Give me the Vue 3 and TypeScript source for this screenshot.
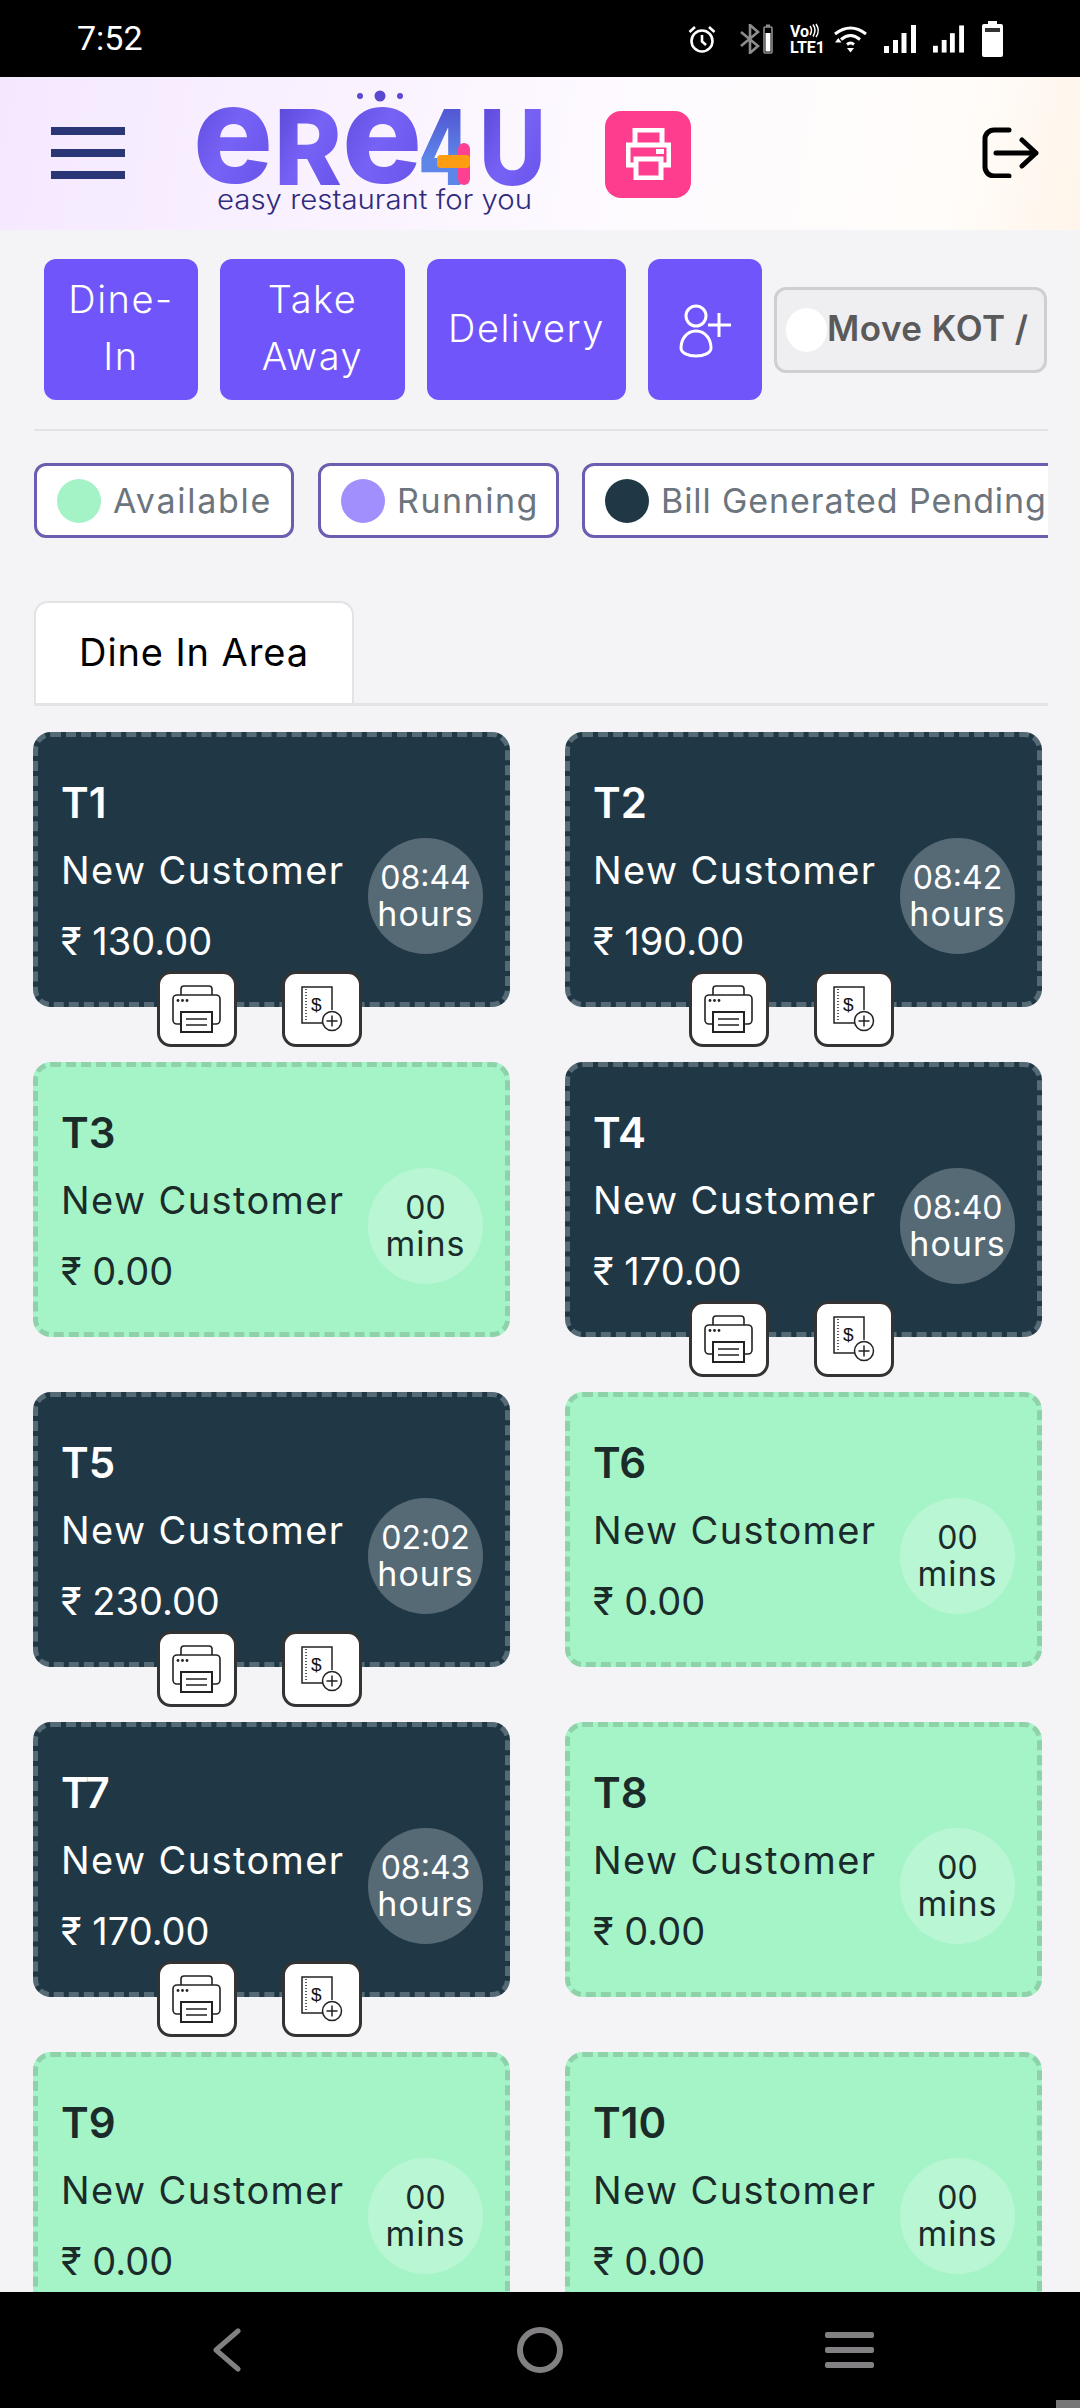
<script setup lang="ts">
interface Table {
  name: string
  running: boolean
  amount: string
  time: string
  unit: string
}

const tables: Table[] = [
  { name: 'T1', running: true, amount: '130.00', time: '08:44', unit: 'hours' },
  { name: 'T2', running: true, amount: '190.00', time: '08:42', unit: 'hours' },
  { name: 'T3', running: false, amount: '0.00', time: '00', unit: 'mins' },
  { name: 'T4', running: true, amount: '170.00', time: '08:40', unit: 'hours' },
  { name: 'T5', running: true, amount: '230.00', time: '02:02', unit: 'hours' },
  { name: 'T6', running: false, amount: '0.00', time: '00', unit: 'mins' },
  { name: 'T7', running: true, amount: '170.00', time: '08:43', unit: 'hours' },
  { name: 'T8', running: false, amount: '0.00', time: '00', unit: 'mins' },
  { name: 'T9', running: false, amount: '0.00', time: '00', unit: 'mins' },
  { name: 'T10', running: false, amount: '0.00', time: '00', unit: 'mins' }
]

const legend = [
  { label: 'Available', color: 'mint' },
  { label: 'Running', color: 'violet' },
  { label: 'Bill Generated Pending', color: 'navy' }
]
</script>

<template>
  <div class="phone">
    <div class="status">
      <span class="clock">7:52</span>
      <div class="status-icons">
        <svg class="s-alarm" width="28" height="28" viewBox="0 0 28 28" fill="none" stroke="#fff" stroke-width="2.6">
          <circle cx="14" cy="16" r="10.5" />
          <path d="M14 10v6.5l4 3.5M1.5 7 7 2M26.5 7 21 2" />
        </svg>
        <svg class="s-bt" width="20" height="30" viewBox="0 0 20 30" fill="none" stroke="#8d8d8d" stroke-width="2.6">
          <path d="M1 8l17 14-8 7V1l8 7L1 22" />
        </svg>
        <svg class="s-minibat" width="10" height="30" viewBox="0 0 10 30">
          <rect x="1" y="3" width="8" height="26" rx="1" fill="none" stroke="#8d8d8d" stroke-width="1.6" />
          <rect x="3" y="0.5" width="4" height="2.5" fill="#8d8d8d" />
          <rect x="2.5" y="9" width="5" height="18.500" fill="#fff" />
        </svg>
        <svg class="s-volte" width="36" height="30" viewBox="0 0 36 30">
          <text x="0" y="13" class="volte-text">Vo</text>
          <path d="M20 2q3 4 0 9M23 0.500q4 5.500 0 12M26 0q4.500 6.500 0 13" fill="none" stroke="#fff" stroke-width="1.5" />
          <text x="0" y="29" class="volte-text" textLength="35" lengthAdjust="spacingAndGlyphs">LTE1</text>
        </svg>
        <svg class="s-wifi" width="33" height="28" viewBox="0 0 33 28" fill="none" stroke="#fff" stroke-width="3">
          <path d="M1 9q15.500-12 31 0M7 14.500q9.500-8 19 0M13 19.500q3.500-3 7 0" />
          <path d="M13 23h7l-3.500 4.500z" fill="#fff" stroke="none" />
          <path d="M1 16.500h6.500l-3.200-4.500z" fill="#fff" stroke="none" transform="translate(0 1)" />
        </svg>
        <svg class="s-signal" width="32" height="28" viewBox="0 0 32 28" fill="#fff">
          <rect x="0" y="21" width="5" height="7" /><rect x="9" y="15" width="5" height="13" /><rect x="17.500" y="8" width="5" height="20" /><rect x="27" y="0" width="5" height="28" />
        </svg>
        <svg class="s-signal2" width="31" height="28" viewBox="0 0 32 28" fill="#fff">
          <rect x="0" y="21" width="5" height="7" /><rect x="9" y="15" width="5" height="13" /><rect x="17.500" y="8" width="5" height="20" /><rect x="27" y="0" width="5" height="28" />
        </svg>
        <svg class="s-bat" width="21" height="36" viewBox="0 0 21 36">
          <path d="M6 0h9v3h4a2 2 0 0 1 2 2v29a2 2 0 0 1-2 2H2a2 2 0 0 1-2-2V5a2 2 0 0 1 2-2h4z" fill="#fff" />
          <rect x="3" y="7" width="15" height="4" fill="#333" />
        </svg>
      </div>
    </div>

    <header class="topbar">
      <div class="burger"><i></i><i></i><i></i></div>
      <svg class="logo" width="346" height="123" viewBox="0 0 346 123">
        <defs>
          <linearGradient id="lg" x1="0" y1="0" x2="1" y2="1">
            <stop offset="0" stop-color="#5443d0" />
            <stop offset="0.5" stop-color="#7762f6" />
            <stop offset="1" stop-color="#6450e6" />
          </linearGradient>
          <linearGradient id="four" x1="0" y1="0" x2="0" y2="1">
            <stop offset="0" stop-color="#4c3fc8" />
            <stop offset="0.6" stop-color="#5d86e8" />
            <stop offset="1" stop-color="#5d86e8" />
          </linearGradient>
        </defs>
        <circle cx="164" cy="4" r="3" fill="#5b4ad0" />
        <circle cx="184" cy="4" r="5.500" fill="#5b4ad0" />
        <circle cx="204" cy="4" r="3" fill="#5b4ad0" />
        <text x="-3" y="91" class="logo-e" fill="url(#lg)" textLength="80" lengthAdjust="spacingAndGlyphs">e</text>
        <text x="78" y="93" class="logo-cap" fill="url(#lg)" textLength="68" lengthAdjust="spacingAndGlyphs">R</text>
        <text x="146" y="91" class="logo-e" fill="url(#lg)" textLength="80" lengthAdjust="spacingAndGlyphs">e</text>
        <text x="222" y="93" class="logo-cap" fill="url(#four)" textLength="52" lengthAdjust="spacingAndGlyphs">4</text>
        <rect x="262" y="51" width="12" height="42" rx="6" fill="#ff4090" />
        <rect x="241" y="63" width="33" height="13" rx="4" fill="#ff9d12" />
        <text x="283" y="93" class="logo-cap" fill="url(#lg)" textLength="67" lengthAdjust="spacingAndGlyphs">U</text>
        <text x="21" y="117" class="logo-tag" textLength="315" lengthAdjust="spacingAndGlyphs">easy restaurant for you</text>
      </svg>
      <button class="print-btn" type="button">
        <svg width="45" height="52" viewBox="0 0 45 52" fill="none" stroke="#fff" stroke-width="5">
          <path d="M9 17V2h27v15" />
          <path d="M9 37H2V17h41v20h-7" />
          <rect x="10" y="31" width="25" height="19" />
          <rect x="30" y="21" width="8" height="5" fill="#fff" stroke="none" />
        </svg>
      </button>
      <svg class="logout" width="57" height="51" viewBox="0 0 57 51" fill="none" stroke="#000" stroke-width="5" stroke-linecap="round" stroke-linejoin="round">
        <path d="M27 3H12a9 9 0 0 0-9 9v28a9 9 0 0 0 9 9h15" />
        <path d="M14 26h40M40 13l14 13-14 13" />
      </svg>
    </header>

    <main class="content">
      <div class="modes">
        <button class="mode mode-dine" type="button"><span>Dine-<br />In</span></button>
        <button class="mode mode-take" type="button"><span>Take<br />Away</span></button>
        <button class="mode mode-delivery" type="button"><span>Delivery</span></button>
        <button class="mode mode-user" type="button">
          <svg width="54" height="56" viewBox="0 0 54 56" fill="none" stroke="#fff" stroke-width="3">
            <circle cx="18" cy="14" r="10" />
            <path d="M18 29c-10 0-15 9-15 17 0 5 7 8 15 8s15-3 15-8c0-8-5-17-15-17z" />
            <path d="M41 11v24M30 23h23" />
          </svg>
        </button>
        <div class="move-kot"><span class="knob"></span><span class="move-label">Move KOT /</span></div>
      </div>
      <div class="divider"></div>

      <div class="legend">
        <div v-for="item in legend" :key="item.label" class="chip" :class="'chip-' + item.color">
          <span class="dot" :class="item.color"></span>
          <span class="chip-label">{{ item.label }}</span>
        </div>
      </div>

      <div class="tabs">
        <div class="tab"><span>Dine In Area</span></div>
      </div>

      <div class="grid">
        <article v-for="t in tables" :key="t.name" class="card" :class="t.running ? 'dark' : 'green'">
          <div class="card-body">
            <div class="info">
              <div class="t-name">{{ t.name }}</div>
              <div class="t-customer">New Customer</div>
              <div class="t-amount">₹ {{ t.amount }}</div>
            </div>
            <div class="timer">
              <span class="t-time">{{ t.time }}</span>
              <span class="t-unit">{{ t.unit }}</span>
            </div>
          </div>
          <div v-if="t.running" class="actions">
            <button class="act" type="button">
              <svg width="50" height="48" viewBox="0 0 50 48" fill="none" stroke="#222" stroke-width="1.600">
                <path d="M9 10V4a3 3 0 0 1 3-3h25a3 3 0 0 1 3 3v6" />
                <path d="M9 39H5a4 4 0 0 1-4-4V14a4 4 0 0 1 4-4h39a4 4 0 0 1 4 4v21a4 4 0 0 1-4 4h-4" />
                <rect x="9" y="27" width="31" height="20" stroke-width="2" />
                <path d="M14 34h21M14 40h21" />
                <circle cx="6" cy="15.500" r="1.400" fill="#222" stroke="none" />
                <circle cx="10.500" cy="15.500" r="1.400" fill="#222" stroke="none" />
                <circle cx="15" cy="15.500" r="1.400" fill="#222" stroke="none" />
              </svg>
            </button>
            <button class="act" type="button">
              <svg width="42" height="46" viewBox="0 0 42 46" fill="none" stroke="#222" stroke-width="1.500">
                <path d="M22 37H1V1h30v23" />
                <path d="M5 3v32" stroke-dasharray="1 2" />
                <text x="10" y="25" class="dollar">$</text>
                <circle cx="31" cy="35" r="9.500" />
                <path d="M31 29.500v11M25.500 35h11" />
              </svg>
            </button>
          </div>
        </article>
      </div>
    </main>

    <nav class="softkeys">
      <svg width="30" height="44" viewBox="0 0 30 44" fill="none" stroke="#828082" stroke-width="5" stroke-linecap="round" stroke-linejoin="round">
        <path d="M26 3 4 22l22 19" />
      </svg>
      <svg width="48" height="48" viewBox="0 0 48 48" fill="none" stroke="#828082" stroke-width="6">
        <circle cx="24" cy="24" r="20" />
      </svg>
      <div class="menu-key"><i></i><i></i><i></i></div>
    </nav>
    <div class="corner"></div>
  </div>
</template>

<style>
html,
body {
  margin: 0;
  background: #f4f4f7;
}
</style>

<style scoped>
.phone {
  position: relative;
  width: 1080px;
  height: 2408px;
  overflow: hidden;
  background: #f4f4f7;
  font-family: Inter, "Noto Sans", sans-serif;
}
.status {
  height: 77px;
  background: #000;
  display: flex;
  align-items: center;
  justify-content: space-between;
  padding: 0 77px;
  box-sizing: border-box;
}
.clock {
  color: #fff;
  font: 400 34px Roboto, sans-serif;
  margin-top: -2px;
}
.status-icons {
  display: flex;
  align-items: center;
}
.status-icons svg {
  display: block;
}
.s-volte,
.logo,
.act svg {
  overflow: visible;
}
.s-bt {
  margin-left: 24px;
}
.s-minibat {
  margin-left: 3px;
}
.s-volte {
  margin-left: 17px;
}
.s-wifi {
  margin-left: 8px;
}
.s-signal {
  margin-left: 17px;
}
.s-signal2 {
  margin-left: 17px;
}
.s-bat {
  margin-left: 18px;
}
.volte-text {
  font: 700 16px Roboto, sans-serif;
  fill: #fff;
}
.topbar {
  height: 153px;
  display: flex;
  align-items: center;
  padding-left: 51px;
  box-sizing: border-box;
  background: linear-gradient(100deg, #f4e8ff 0%, #f9f0ff 25%, #fefbff 60%, #fffcf9 88%, #fff5ea 100%);
}
.burger {
  width: 74px;
  display: flex;
  flex-direction: column;
  gap: 14px;
  margin-top: -1px;
}
.burger i {
  display: block;
  height: 8px;
  background: #2b3676;
}
.logo {
  display: block;
  margin-left: 71px;
  margin-top: -1px;
}
.logo-e {
  font: 800 138px Inter, sans-serif;
}
.logo-cap {
  font: 800 104px Inter, sans-serif;
}
.logo-tag {
  font: 300 27px Inter, sans-serif;
  fill: #2f2a7c;
}
.print-btn {
  width: 86px;
  height: 87px;
  margin-left: 63px;
  margin-top: 1px;
  border: 0;
  padding: 0;
  border-radius: 16px;
  background: #ff3d8e;
  display: flex;
  align-items: center;
  justify-content: center;
}
.logout {
  display: block;
  margin-left: 291px;
  margin-top: -2px;
}
.content {
  padding: 29px 32px 0 34px;
}
.modes {
  display: flex;
  align-items: center;
  gap: 22px;
  padding-left: 10px;
}
.mode {
  height: 141px;
  border: 0;
  padding: 0;
  border-radius: 12px;
  background: #7056fa;
  color: #fff;
  font: 300 38px/57px Inter, sans-serif;
  letter-spacing: 1.5px;
  flex-shrink: 0;
  display: flex;
  align-items: center;
  justify-content: center;
  text-align: center;
}
.mode span {
  margin-top: -3px;
}
.mode-dine {
  width: 154px;
}
.mode-take {
  width: 185px;
}
.mode-delivery {
  width: 199px;
}
.mode-user {
  width: 114px;
}
.move-kot {
  width: 273px;
  height: 86px;
  margin-left: -10px;
  box-sizing: border-box;
  border: 3px solid #cfcfd1;
  border-radius: 12px;
  background: #efeef0;
  display: flex;
  align-items: center;
  padding-left: 9px;
  overflow: hidden;
  flex-shrink: 0;
}
.knob {
  width: 41px;
  height: 44px;
  border-radius: 50%;
  background: #fff;
  flex-shrink: 0;
}
.move-label {
  font: 600 35px Inter, sans-serif;
  letter-spacing: 0.5px;
  color: #5a5a5a;
  white-space: nowrap;
  margin-top: -4px;
}
.divider {
  height: 2px;
  margin-top: 29px;
  background: #e3e3e6;
}
.legend {
  display: flex;
  gap: 24px;
  margin-top: 32px;
  overflow: hidden;
}
.chip {
  height: 75px;
  box-sizing: border-box;
  border: 3px solid #6b5db0;
  border-radius: 12px;
  background: #fff;
  display: flex;
  align-items: center;
  padding: 0 0 0 20px;
  gap: 12px;
  flex-shrink: 0;
}
.chip-mint {
  width: 260px;
}
.chip-violet {
  width: 241px;
}
.chip-navy {
  width: 480px;
  margin-left: -1px;
}
.chip-mint .chip-label {
  letter-spacing: 1.7px;
}
.chip-violet .chip-label {
  letter-spacing: 1.5px;
}
.chip-navy .chip-label {
  letter-spacing: 0.9px;
}
.dot {
  width: 44px;
  height: 44px;
  border-radius: 50%;
}
.mint {
  background: #a3f3c6;
}
.violet {
  background: #a08ffc;
}
.navy {
  background: #203845;
}
.chip-label {
  font: 400 34px Inter, sans-serif;
  color: #6c757d;
  white-space: nowrap;
}
.tabs {
  margin-top: 63px;
  border-bottom: 3px solid #e3e3e6;
  display: flex;
}
.tab {
  width: 320px;
  height: 102px;
  box-sizing: border-box;
  border: 2px solid #e3e3e6;
  border-bottom: 0;
  border-radius: 14px 14px 0 0;
  background: #fff;
  display: flex;
  align-items: center;
  justify-content: center;
  font: 400 38px Inter, sans-serif;
  letter-spacing: 0.9px;
  color: #000;
}
.tab span {
  margin-top: -3px;
}
.grid {
  display: grid;
  grid-template-columns: 477px 477px;
  grid-auto-rows: 275px;
  gap: 55px;
  margin: 26px 0 0 -1px;
}
.card {
  position: relative;
  box-sizing: border-box;
  border: 5px dashed;
  border-radius: 18px;
  padding: 36px 22px 0 23px;
}
.card.dark {
  background: #203845;
  border-color: #566a76;
  color: #fff;
}
.card.green {
  background: #a5f4c8;
  border-color: #8fd2aa;
  color: #1b2b2a;
}
.card-body {
  display: flex;
  justify-content: space-between;
}
.t-name {
  font-size: 42px;
  line-height: 60px;
  font-weight: 600;
}
.t-customer {
  font-size: 38px;
  line-height: 60px;
  letter-spacing: 1.4px;
  margin-top: 7px;
  white-space: nowrap;
}
.t-amount {
  font-size: 38px;
  line-height: 60px;
  margin-top: 11px;
}
.timer {
  width: 115px;
  height: 116px;
  margin-top: 65px;
  border-radius: 50%;
  display: flex;
  flex-direction: column;
  align-items: center;
  justify-content: center;
  line-height: 36px;
  flex-shrink: 0;
}
.t-time {
  font-size: 32px;
}
.t-unit {
  font-size: 34px;
  letter-spacing: 1px;
}
.dark .timer {
  background: #566a76;
}
.green .timer {
  background: #b9f6d4;
}
.actions {
  position: absolute;
  left: 119px;
  bottom: -45px;
  display: flex;
  gap: 45px;
}
.act {
  width: 80px;
  height: 76px;
  box-sizing: border-box;
  padding: 0;
  border: 3px solid #333;
  border-radius: 14px;
  background: #fff;
  display: flex;
  align-items: center;
  justify-content: center;
}
.dollar {
  font: 400 19px "Liberation Sans", sans-serif;
  fill: #111;
  stroke: none;
}
.softkeys {
  position: absolute;
  left: 0;
  right: 0;
  bottom: 0;
  height: 116px;
  background: #000;
  display: flex;
  align-items: center;
  padding-left: 212px;
  box-sizing: border-box;
}
.softkeys svg:nth-child(2) {
  margin-left: 274px;
}
.menu-key {
  width: 49px;
  margin-left: 261px;
  display: flex;
  flex-direction: column;
  gap: 9px;
}
.menu-key i {
  display: block;
  height: 6px;
  border-radius: 2px;
  background: #828082;
}
.corner {
  position: absolute;
  right: 0;
  bottom: 0;
  width: 24px;
  height: 8px;
  background: #777;
}
</style>
